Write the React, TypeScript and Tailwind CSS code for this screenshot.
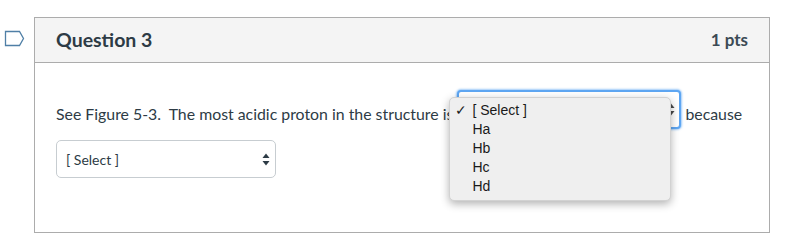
const Arrows = ({ className }: { className?: string }) => (
  <svg width="8" height="13" viewBox="0 0 8 13" className={className}>
    <path d="M4 0.5 L7.5 5 L0.5 5 Z" fill="currentColor" />
    <path d="M4 12.5 L7.5 8 L0.5 8 Z" fill="currentColor" />
  </svg>
);

const options = ["Ha", "Hb", "Hc", "Hd"];

const App = () => {
  return (
    <div className="w-[797px] h-[252px] bg-white relative font-['Lato','Noto_Sans',sans-serif] text-[#2d3b45]">
      {/* bookmark flag */}
      <svg width="21" height="17" viewBox="0 0 21 17" className="absolute left-[4px] top-[30px]">
        <path d="M1.5 1.5 H15.5 L19.5 8.5 L15.5 15.5 H1.5 Z" fill="none" stroke="#4f7fa6" strokeWidth="1.3" />
      </svg>

      <div className="absolute left-[34px] top-[17px] w-[736px] h-[216px] border border-[#acacac] flex flex-col">
        <div className="h-[45px] bg-[#f4f4f4] border-b border-[#acacac] flex items-center justify-between pl-[21px] pr-[21px]">
          <span className="text-[19.5px] font-bold">Question 3</span>
          <span className="text-[17px] font-bold text-[#3b4a55]">1 pts</span>
        </div>

        <div className="pl-[21px] pt-[27px]">
          <div className="flex items-start text-[15.85px] h-[39px]">
            <span className="whitespace-pre mt-[14px] leading-[20px]">See Figure 5-3.  The most acidic proton in the structure is </span>
            <div className="relative w-[224px] h-[39px] rounded-[4px] border-2 border-[#5ea6f2] shadow-[0_0_2px_1px_rgba(94,166,242,0.6)] bg-white flex items-center justify-end pr-[4px]">
              <Arrows className="text-[#4a4a4a]" />
              {/* open native list */}
              <div className="absolute left-[-10px] top-[5px] w-[222px] h-[104px] rounded-[5px] bg-[#efefef] border border-[#d2d2d2] shadow-[0_3px_8px_rgba(0,0,0,0.3)] font-['Liberation_Sans',Arial,sans-serif] text-[14px] text-[#1a1a1a] pt-[3px] leading-[19px]">
                <div className="flex">
                  <span className="w-[22px] pl-[5px] text-[14px]">✓</span>
                  <span>[ Select ]</span>
                </div>
                {options.map((o) => (
                  <div key={o} className="pl-[22px]">{o}</div>
                ))}
              </div>
            </div>
            <span className="ml-[4px] mt-[14px] leading-[20px]">because</span>
          </div>

          <div className="mt-[11px] w-[220px] h-[38px] rounded-[5px] border border-[#c7cdd1] bg-white flex items-center justify-between pl-[9px] pr-[5px]">
            <span className="text-[14px]">[ Select ]</span>
            <Arrows className="text-[#2d3b45]" />
          </div>
        </div>
      </div>
    </div>
  );
};

export default App;
